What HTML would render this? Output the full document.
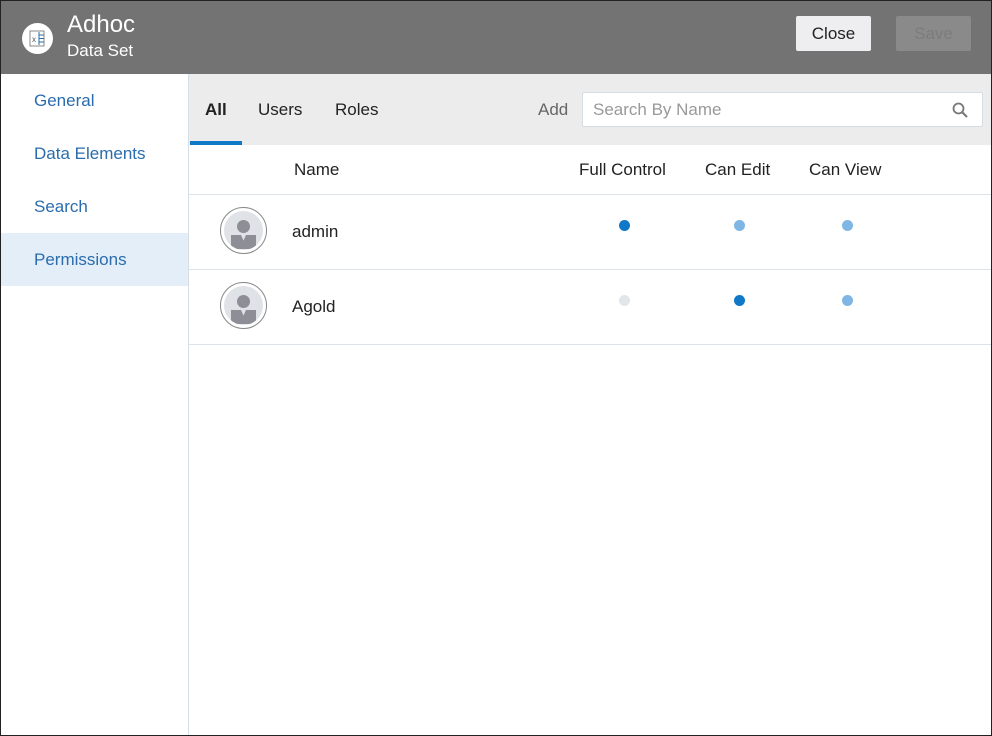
<!DOCTYPE html>
<html><head><style>
*{box-sizing:border-box;margin:0;padding:0}
body{width:992px;height:736px;overflow:hidden;font-family:"Liberation Sans",sans-serif;background:#fff;position:relative}
.frame{position:absolute;inset:0;border:1px solid #222;}
.hdr{position:absolute;left:0;top:0;width:992px;height:74px;background:#737373;}
.logo{position:absolute;left:22px;top:23px;width:31px;height:31px;border-radius:50%;background:#fff}
.t1{position:absolute;left:67px;top:11px;color:#fff;font-size:24px}
.t2{position:absolute;left:67px;top:41px;color:#fff;font-size:17px}
.btn{position:absolute;top:16px;width:75px;height:35px;border-radius:2px;font-size:17px;text-align:center;line-height:35px}
.side{position:absolute;left:1px;top:74px;width:188px;height:661px;border-right:1px solid #d6dde3;background:#fff}
.side div{height:53px;line-height:53px;padding-left:33px;color:#2a6cae;font-size:17px}
.tabs{position:absolute;left:189px;top:74px;width:802px;height:71px;background:#ececec}
.tab{position:absolute;top:26px;font-size:17px;color:#222}
.srch{position:absolute;left:393px;top:18px;width:401px;height:35px;background:#fff;border:1px solid #d6dde3;border-radius:2px;color:#999;font-size:17px;line-height:33px;padding-left:10px}
.col{position:absolute;top:160px;font-size:17px;color:#222}
.line{position:absolute;left:189px;width:802px;height:1px;background:#dde3e8}
.row{position:absolute;font-size:17px;color:#222;left:292px}
.av{position:absolute;left:220px;width:47px;height:47px;border-radius:50%;border:1px solid #888;background:#fff}
.av i{position:absolute;left:3px;top:3px;width:39px;height:39px;border-radius:50%;background:#dfe2e6;overflow:hidden}
.av b{position:absolute;left:13px;top:9px;width:13px;height:13px;border-radius:50%;background:#8e8e96}
.av u{position:absolute;left:7px;top:24px;width:25px;height:14px;background:#8e8e96;clip-path:polygon(0 0,40% 0,50% 40%,60% 0,100% 0,100% 100%,0 100%)}
.dot{position:absolute;width:11px;height:11px;border-radius:50%}
</style></head><body>
<div class="hdr">
<div class="logo"><svg width="31" height="31"><rect x="8" y="8" width="14" height="15" fill="none" stroke="#888" stroke-width="1"/><text x="10" y="19" font-size="8" fill="#555" font-family="Liberation Sans">x</text><path d="M17 9v13M17 12h5M17 15.5h5M17 19h5" stroke="#2a6cae" stroke-width="1"/></svg></div>
<div class="t1">Adhoc</div><div class="t2">Data Set</div>
<div class="btn" style="left:796px;background:#eeeef0;color:#222">Close</div>
<div class="btn" style="left:896px;background:#8a8a8a;color:#7c7c7c">Save</div>
</div>
<div class="side">
<div>General</div><div>Data Elements</div><div>Search</div><div style="background:#e3eef8">Permissions</div>
</div>
<div class="tabs">
<div class="tab" style="left:16px;font-weight:bold">All</div>
<div style="position:absolute;left:1px;top:67px;width:52px;height:4px;background:#0f79c8"></div>
<div class="tab" style="left:69px">Users</div>
<div class="tab" style="left:146px">Roles</div>
<div class="tab" style="left:349px;color:#666">Add</div>
<div class="srch">Search By Name
<svg style="position:absolute;right:14px;top:9px" width="16" height="16"><circle cx="6.5" cy="6.5" r="5" fill="none" stroke="#777" stroke-width="1.8"/><path d="M10 10l5 5" stroke="#777" stroke-width="2"/></svg></div>
</div>
<div class="col" style="left:294px">Name</div>
<div class="col" style="left:579px">Full Control</div>
<div class="col" style="left:705px">Can Edit</div>
<div class="col" style="left:809px">Can View</div>
<div class="line" style="top:194px"></div>
<div class="av" style="top:207px"><i><b></b><u></u></i></div>
<div class="row" style="top:222px">admin</div>
<div class="dot" style="left:619px;top:220px;background:#0f79c8"></div>
<div class="dot" style="left:734px;top:220px;background:#7fb6e3"></div>
<div class="dot" style="left:842px;top:220px;background:#7fb6e3"></div>
<div class="line" style="top:269px"></div>
<div class="av" style="top:282px"><i><b></b><u></u></i></div>
<div class="row" style="top:297px">Agold</div>
<div class="dot" style="left:619px;top:295px;background:#e1e6ea"></div>
<div class="dot" style="left:734px;top:295px;background:#0f79c8"></div>
<div class="dot" style="left:842px;top:295px;background:#7fb6e3"></div>
<div class="line" style="top:344px"></div>
<div class="frame"></div>
</body></html>
